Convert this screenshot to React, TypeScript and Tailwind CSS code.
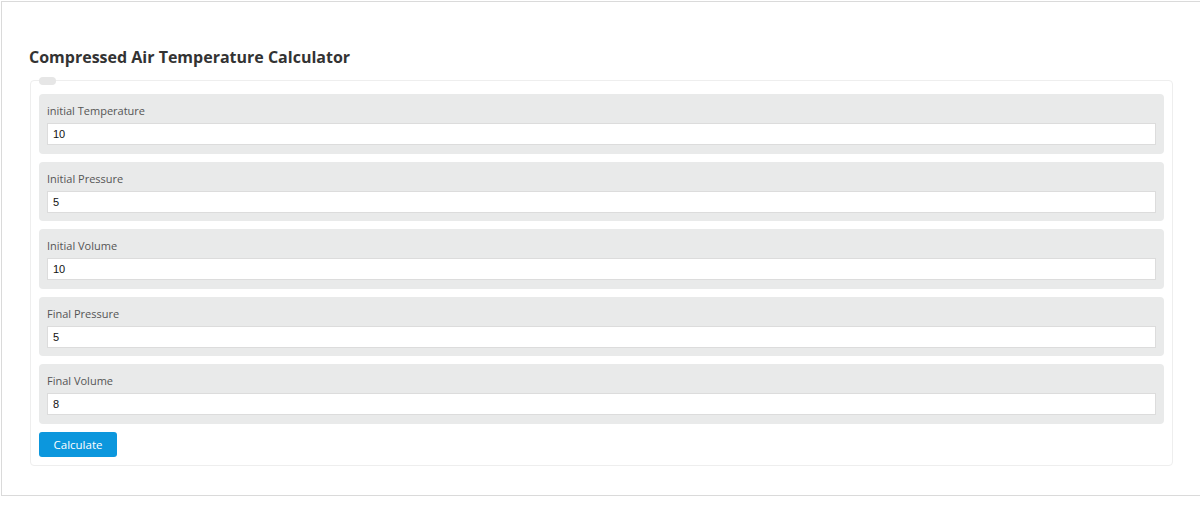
import React from 'react';

const fields = [
  { label: 'initial Temperature', value: '10' },
  { label: 'Initial Pressure', value: '5' },
  { label: 'Initial Volume', value: '10' },
  { label: 'Final Pressure', value: '5' },
  { label: 'Final Volume', value: '8' },
];

const Field: React.FC<{ label: string; value: string }> = ({ label, value }) => (
  <div className="bg-[#e9eaea] rounded-[4px] px-2 pt-[9px] pb-[8.5px]">
    <div className="text-[11px] leading-[16px] text-[#555] mb-[4px] font-['Open_Sans',sans-serif]">{label}</div>
    <input
      className="block w-full h-[22px] bg-white border border-[#dcdcdc] px-[5px] text-[11px] text-[#111] font-['Liberation_Sans',Arial,sans-serif] outline-none"
      defaultValue={value}
    />
  </div>
);

export default function App() {
  return (
    <div className="w-[1200px] h-[530px] bg-white overflow-hidden font-['Open_Sans',sans-serif]">
      <div className="mt-px ml-[1px] h-[495px] border-l border-t border-b border-[#dadada] pl-[27px] pt-[43px]">
        <h1 className="text-[16px] leading-[24px] font-bold text-[#333] mb-[11px]">Compressed Air Temperature Calculator</h1>
        <div className="relative ml-[1px] w-[1143px] border border-[#eeeeee] rounded-[4px] px-2 pt-[13px] pb-2">
          <span className="absolute left-[8px] -top-[4px] w-[17px] h-[8px] rounded-full bg-[#e6e6e6]" />
          <div className="flex flex-col gap-2">
            {fields.map(f => (
              <Field key={f.label} label={f.label} value={f.value} />
            ))}
          </div>
          <button className="mt-[8.5px] w-[78px] h-[25px] rounded-[3px] bg-[#0c97dd] text-white text-[11.5px] font-['Open_Sans',sans-serif]">
            Calculate
          </button>
        </div>
      </div>
    </div>
  );
}
